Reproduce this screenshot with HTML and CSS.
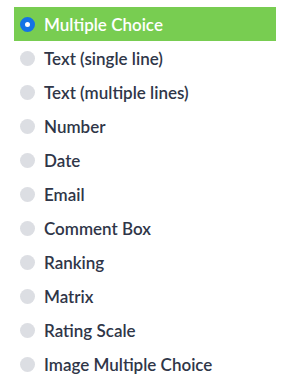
FILE: index.html
```html
<!DOCTYPE html>
<html lang="en">
<head>
  <meta charset="UTF-8" />
  <title>Question Types</title>
  <meta name="viewport" content="width=device-width, initial-scale=1.0" />
  <link rel="stylesheet" href="styles.css">
</head>
<body>
  <ul class="type-list">
    <li class="type-item active"><span class="radio"></span>Multiple Choice</li>
    <li class="type-item"><span class="radio"></span>Text (single line)</li>
    <li class="type-item"><span class="radio"></span>Text (multiple lines)</li>
    <li class="type-item"><span class="radio"></span>Number</li>
    <li class="type-item"><span class="radio"></span>Date</li>
    <li class="type-item"><span class="radio"></span>Email</li>
    <li class="type-item"><span class="radio"></span>Comment Box</li>
    <li class="type-item"><span class="radio"></span>Ranking</li>
    <li class="type-item"><span class="radio"></span>Matrix</li>
    <li class="type-item"><span class="radio"></span>Rating Scale</li>
    <li class="type-item"><span class="radio"></span>Image Multiple Choice</li>
  </ul>
</body>
</html>
```

FILE: styles.css
```css
* {
  box-sizing: border-box;
}

body {
  margin: 0;
  background: #fff;
  font-family: "Lato", sans-serif;
  padding: 7px 13px 0 14px;
}

.type-list {
  list-style: none;
  margin: 0;
  padding: 0;
}

.type-item {
  display: flex;
  align-items: center;
  gap: 9px;
  height: 34px;
  padding-left: 6px;
  font-size: 17px;
  font-weight: 600;
  color: #2f3648;
}

.type-item.active {
  background: #78cd51;
  color: #fff;
}

.radio {
  width: 15px;
  height: 15px;
  border-radius: 50%;
  background: #dcdee3;
  flex-shrink: 0;
}

.active .radio {
  background: #fff;
  border: 5px solid #1473e6;
}
```
